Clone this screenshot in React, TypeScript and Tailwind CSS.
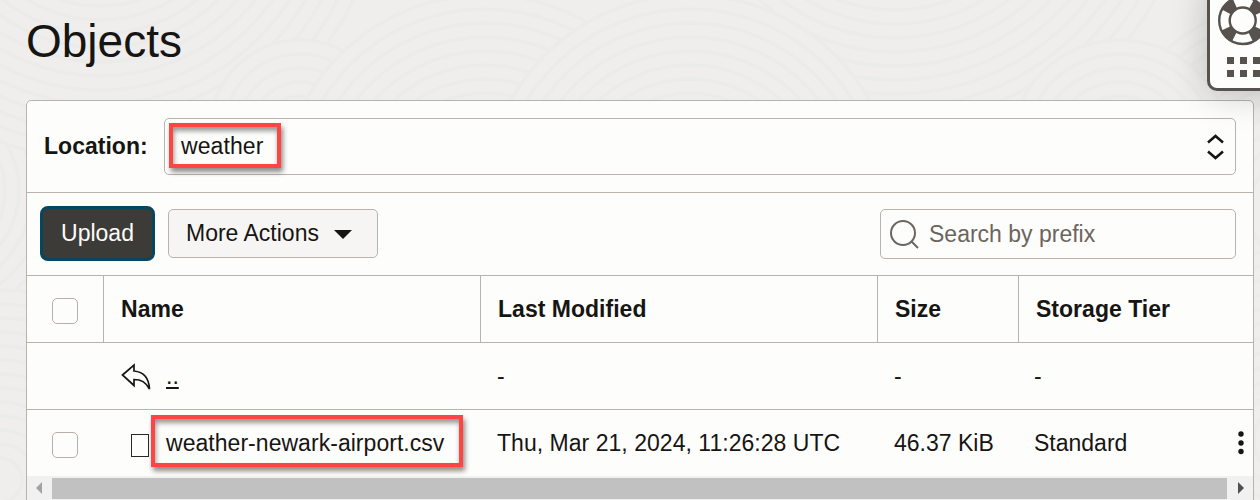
import type { ReactNode } from "react";

const cols = "grid grid-cols-[76px_377px_397px_141px_1fr]";

const discs = [
  { x: -70, y: 190, r: 215 },
  { x: 1310, y: 210, r: 215 },
  { x: 100, y: -120, r: 280 },
  { x: 895, y: -150, r: 300 },
  { x: 300, y: 130, r: 90 },
  { x: 1120, y: 150, r: 110 },
  { x: 485, y: 200, r: 205 },
  { x: 690, y: 200, r: 205 },
  { x: 0, y: 480, r: 190 },
  { x: 1290, y: 440, r: 190 },
];

function Ripples() {
  return (
    <svg className="absolute inset-0" width="1260" height="500" aria-hidden="true">
      {discs.map((d, i) => (
        <g key={i} fill="none" stroke="#ebebe9" strokeWidth="3.5">
          <circle cx={d.x} cy={d.y} r={d.r} fill="#efeeec" />
          {Array.from({ length: Math.floor(d.r / 14) - 1 }, (_, k) => (
            <circle key={k} cx={d.x} cy={d.y} r={d.r - 14 * (k + 1)} />
          ))}
        </g>
      ))}
    </svg>
  );
}

function Highlight({ className }: { className: string }) {
  return (
    <div
      className={`absolute border-4 border-[#ff4444] shadow-[2px_4px_5px_rgba(0,0,0,0.45),inset_1px_4px_5px_rgba(0,0,0,0.4)] ${className}`}
    />
  );
}

function Checkbox() {
  return <div className="mt-[3px] h-[26px] w-[26px] rounded-[5px] border border-[#b8b0a8]" />;
}

function Head({ children }: { children: ReactNode }) {
  return (
    <div className="flex items-center border-l border-[#bab3ac] pl-[17px] font-bold tracking-[0.02px]">{children}</div>
  );
}

function HelpPanel() {
  return (
    <div className="absolute left-[1207px] top-[-20px] h-[111px] w-[100px] rounded-[10px] border-[3px] border-[#57524e] bg-[#fdfdfb] shadow-[0_4px_36px_rgba(0,0,0,0.2)]">
      <svg className="absolute left-[-3px] top-[17px]" width="60" height="88" viewBox="1207 0 60 88">
        <g fill="none" stroke="#57524e">
          <circle
            cx="1242.7"
            cy="20.5"
            r="18.5"
            strokeWidth="11"
            strokeDasharray="12 17.06"
            strokeDashoffset="-8.53"
          />
          <circle cx="1242.7" cy="20.5" r="23.5" strokeWidth="2.4" />
          <circle cx="1242.7" cy="20.5" r="13" strokeWidth="2.4" />
        </g>
        <g fill="#57524e">
          {[1227, 1240, 1253].map((x) =>
            [57, 70].map((y) => <rect key={`${x}-${y}`} x={x} y={y} width="7" height="7" />),
          )}
        </g>
      </svg>
    </div>
  );
}

export default function App() {
  return (
    <div className="relative h-[500px] w-[1260px] overflow-hidden bg-[#efeeec] font-['Liberation_Sans',Arial,sans-serif] text-[23px] leading-[28px] text-[#161513]">
      <Ripples />
      <h1 className="relative h-[100px] pl-[26px] pt-[14px] text-[46px] leading-[54px]">Objects</h1>

      <main className="relative ml-[26px] h-[420px] w-[1228px] rounded-t-[5px] border border-[#bab3ac] bg-[#fdfdfb]">
        <div className="flex h-[92px] items-center border-b border-[#bab3ac] pl-[17px] pr-[17px]">
          <span className="w-[120px] pb-[2px] font-bold tracking-[0.02px]">Location:</span>
          <div className="flex h-[57px] flex-1 items-center justify-between rounded-[5px] border border-[#bab3ac] pl-[16px] pr-[11px]">
            <span className="pb-[2px] tracking-[0.1px]">weather</span>
            <svg width="18" height="26" fill="none" stroke="#161513" strokeWidth="2.5">
              <path d="M2 8.5 9.5 2 17 8.5M2 17.5 9.5 24 17 17.5" />
            </svg>
          </div>
        </div>

        <div className="flex h-[83px] items-center border-b border-[#bab3ac] pl-[13px] pr-[17px]">
          <button className="mb-[2px] h-[55px] w-[115px] rounded-[8px] border-[3px] border-[#06475f] bg-[#3d3b38] text-[#fdfdfb]">
            Upload
          </button>
          <button className="mb-[2px] ml-[13px] flex h-[49px] w-[210px] items-center rounded-[5px] border border-[#bab3ac] bg-[#f6f5f4] pl-[17px]">
            More Actions
            <svg className="ml-[15px] mt-[2px]" width="18" height="9" fill="#161513">
              <path d="M0 0h18L9 9z" />
            </svg>
          </button>
          <div className="ml-auto flex h-[50px] w-[356px] items-center rounded-[5px] border border-[#bab3ac] pl-[9px] text-[#6b6560]">
            <svg className="mr-[10px]" width="29" height="30" fill="none" stroke="#6b6560" strokeWidth="2">
              <circle cx="13" cy="14" r="12" />
              <path d="m21.5 22.5 6.5 6.5" />
            </svg>
            Search by prefix
          </div>
        </div>

        <div className={`${cols} h-[67px] border-b border-[#bab3ac]`}>
          <div className="flex items-center pl-[25px]">
            <Checkbox />
          </div>
          <Head>Name</Head>
          <Head>Last Modified</Head>
          <Head>Size</Head>
          <Head>Storage Tier</Head>
        </div>

        <div className={`${cols} h-[67px] items-center border-b border-[#bab3ac]`}>
          <span />
          <div className="flex items-center pl-[18px]">
            <svg className="mt-[2px]" width="30" height="28" fill="none" stroke="#161513" strokeWidth="1.7">
              <path d="M1.5 12 13 2V8C23 9 28 16 28.5 26 24.5 19 20.5 16.5 13 16.5V22.5Z" />
            </svg>
            <span className="ml-[15px] underline decoration-2 underline-offset-[3px]">..</span>
          </div>
          <span className="pl-[17px]">-</span>
          <span className="pl-[17px]">-</span>
          <span className="pl-[16px]">-</span>
        </div>

        <div className={`${cols} h-[66px] items-center`}>
          <div className="pl-[25px]">
            <Checkbox />
          </div>
          <div className="flex items-center pl-[28px]">
            <span className="mt-[4px] h-[23px] w-[18px] border-[1.5px] border-[#2b2927]" />
            <span className="ml-[17px] tracking-[0.04px]">weather-newark-airport.csv</span>
          </div>
          <span className="pl-[17px] tracking-[0.03px]">Thu, Mar 21, 2024, 11:26:28 UTC</span>
          <span className="pl-[17px]">46.37 KiB</span>
          <div className="flex items-center justify-between pl-[16px] pr-[9px]">
            Standard
            <svg width="6" height="24" fill="#161513">
              <circle cx="3" cy="3" r="2.7" />
              <circle cx="3" cy="12" r="2.7" />
              <circle cx="3" cy="20.5" r="2.7" />
            </svg>
          </div>
        </div>

        <div className="flex h-[24px] items-center bg-[#f1f1f1]">
          <svg className="ml-[9px]" width="6" height="12" fill="#a3a3a3">
            <path d="M6 0v12L0 6z" />
          </svg>
          <div className="ml-[10px] h-[21px] w-[1175px] bg-[#c1c1c1]" />
          <svg className="ml-[11px]" width="6" height="12" fill="#505050">
            <path d="M0 0v12l6-6z" />
          </svg>
        </div>
      </main>

      <Highlight className="left-[169px] top-[123px] h-[45px] w-[112px]" />
      <Highlight className="left-[151px] top-[415px] h-[52px] w-[312px]" />
      <HelpPanel />
    </div>
  );
}
